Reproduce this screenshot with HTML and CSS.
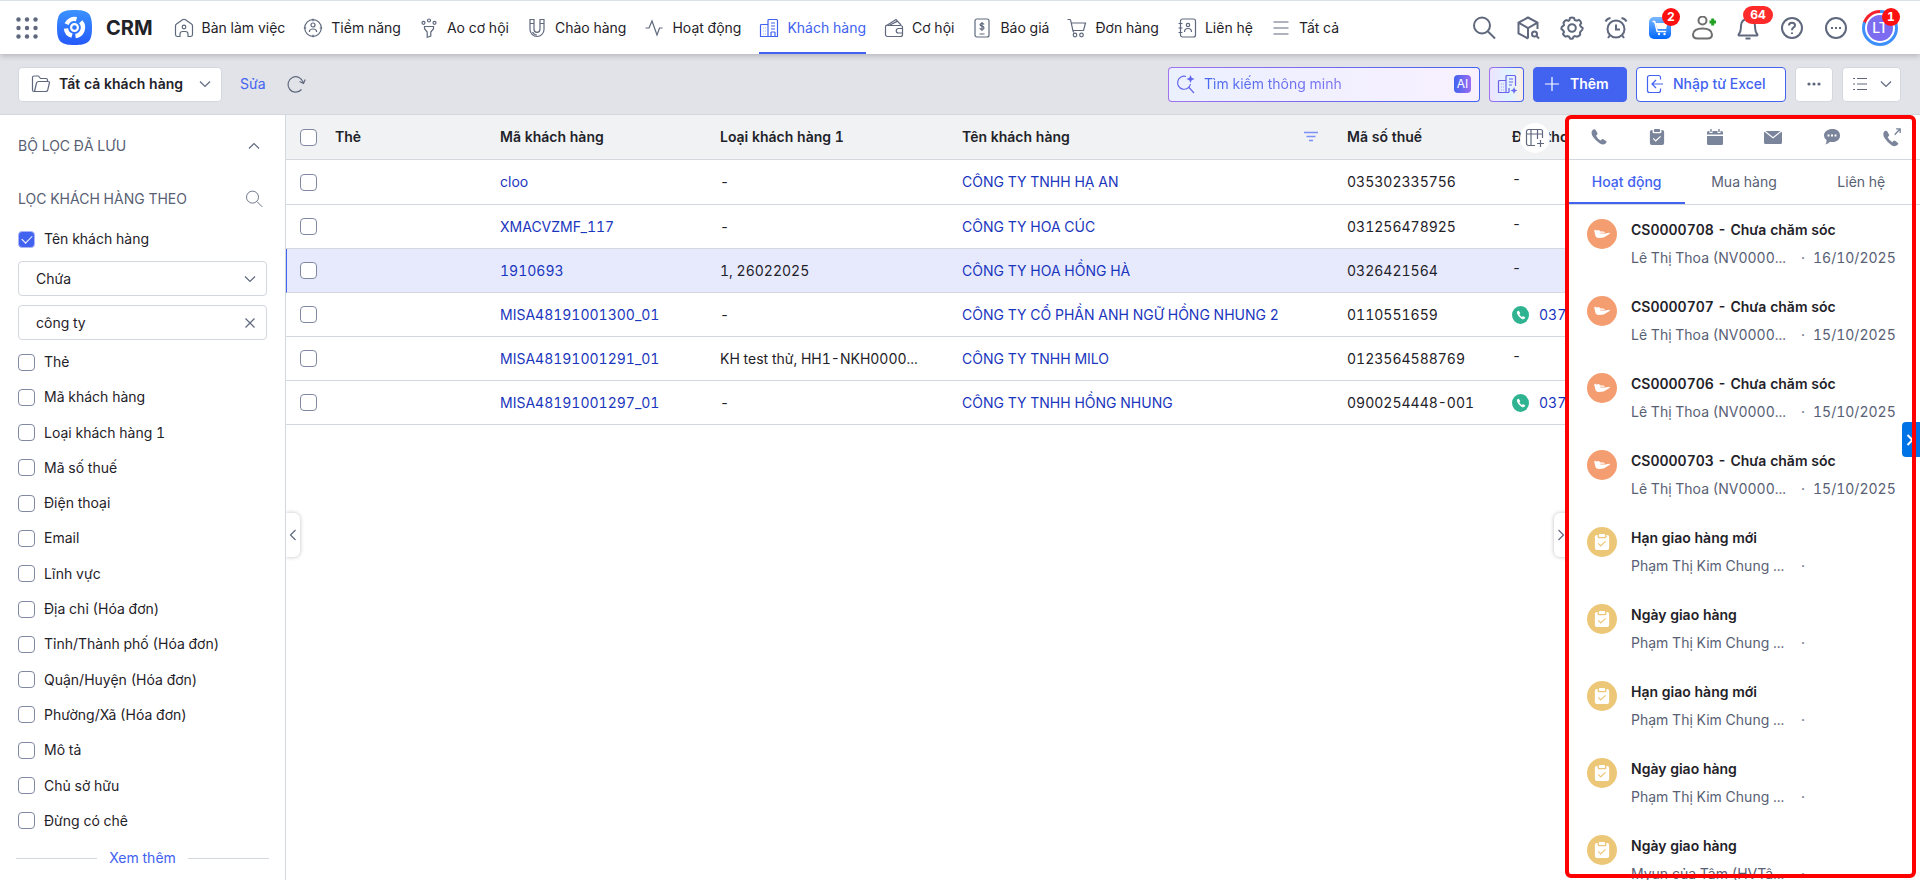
FILE: index.html
```html
<!DOCTYPE html>
<html lang="vi">
<head>
  <meta charset="UTF-8">
  <meta name="viewport" content="width=device-width, initial-scale=1.0">
  <title>CRM - Khách hàng</title>
  <link rel="stylesheet" href="styles.css">
</head>
<body>
  <!-- shared icons -->
  <svg class="sprite" aria-hidden="true">
    <symbol id="i-down" viewBox="0 0 12 12"><path d="M1 3.500l5 5 5-5"/></symbol>
    <symbol id="i-search" viewBox="0 0 24 24"><circle cx="10" cy="9.500" r="8"/><path d="M16 15.500l7 7"/></symbol>
    <symbol id="i-building" viewBox="0 0 20 20"><path d="M9 18.500V2.500a1 1 0 0 1 1-1h7.500a1 1 0 0 1 1 1v16H1.500V7.500a1 1 0 0 1 1-1H9M12 5h4M12 8h4M12 11h4M12 14v4.500M16 14v4.500M12 14h4M4 10h.5M6.500 10h.5M4 13h.5M6.500 13h.5M4 16h.5M6.500 16h.5"/></symbol>
    <symbol id="i-phone" viewBox="0 0 20 20"><path d="M2 3.500Q1 6 3.500 10T11 17.300q3.500 2 6 .2l1-1q1-1-.2-2l-3-2q-1-.6-1.900.3l-1 1.200q-2.800-1-5.200-5.300l1.300-1.400q.7-.8.2-1.800L6.300 2.300Q5.300 1 4.300 1.500Q2.800 2 2 3.500z"/></symbol>
    <symbol id="i-task" viewBox="0 0 18 20"><path fill-rule="evenodd" d="M4 2.200V4q0 1.700 1.700 1.700h6.600Q14 5.700 14 4V2.200h.8Q17 2.200 17 4.400v12.400Q17 19 14.800 19H3.200Q1 19 1 16.800V4.400Q1 2.200 3.200 2.200zM5.200 11.200l-.9.900 3.200 3.200 6-5.600-.9-.9-5.100 4.700zM6.500 1h5q1 0 1 1v1.500q0 .8-.8.8H6.300q-.8 0-.8-.8V2q0-1 1-1z"/></symbol>
    <symbol id="i-hand" viewBox="0 0 20 14"><path d="M1 3.500q0-2 1.500-1.500L4 3.200q1-1.200 2.500-.7l2 1.500h3.300q1.700.2 1.500 1.600H8v.9h6l4.300-1q1.500 0 .9 1.200L14 10q-2 1.300-4.500 1.500l-3.500.2Q3.500 11.500 2.500 9.500z"/></symbol>
  </svg>

  <header class="topbar">
    <button class="icon-btn apps" aria-label="Ứng dụng">
      <svg width="22" height="22" viewBox="0 0 22 22"><g class="fill"><circle cx="2.500" cy="2.500" r="2.200"/><circle cx="11" cy="2.500" r="2.200"/><circle cx="19.500" cy="2.500" r="2.200"/><circle cx="2.500" cy="11" r="2.200"/><circle cx="11" cy="11" r="2.200"/><circle cx="19.500" cy="11" r="2.200"/><circle cx="2.500" cy="19.500" r="2.200"/><circle cx="11" cy="19.500" r="2.200"/><circle cx="19.500" cy="19.500" r="2.200"/></g></svg>
    </button>
    <a class="brand" href="#">
      <svg width="35" height="35" viewBox="0 0 35 35">
        <defs><linearGradient id="logoFill" x1="0" y1="0" x2="0" y2="1"><stop offset="0" stop-color="#3b93ff"/><stop offset="1" stop-color="#2459fb"/></linearGradient></defs>
        <path fill="url(#logoFill)" d="M17.500 0C31 0 35 3 35 17.500S31 35 17.500 35 0 32 0 17.500 4 0 17.500 0z"/>
        <g fill="none" stroke="#fff"><path stroke-width="4.400" d="M9.600 14.200A8.500 8.500 0 0 1 19.500 9.200M23.700 11.800A8.500 8.500 0 0 1 18.500 26M15 25.700A8.500 8.500 0 0 1 9 18.500"/><circle cx="17.500" cy="17.500" r="3.400" stroke-width="2.200"/></g>
      </svg>
      <span>CRM</span>
    </a>
    <nav class="nav">
      <a href="#"><svg width="20" height="20" viewBox="0 0 20 20"><path d="M6 18.500H3.200A2 2 0 0 1 1.500 16.500V8q0-1.200 1-1.900l6-4.300q1.500-1 3 0l6 4.300q1 .7 1 1.900v8.500a2 2 0 0 1-1.700 2H14v-2.500a2.500 2.500 0 0 0-2.500-2.500h-3A2.500 2.500 0 0 0 6 16z"/><circle cx="10" cy="9" r="1.800"/></svg>Bàn làm việc</a>
      <a href="#"><svg width="20" height="20" viewBox="0 0 20 20"><circle cx="10" cy="10" r="8.300"/><circle cx="10" cy="7" r="2"/><path d="M6.500 14v-1q.3-2 3.500-2t3.500 2v1M10 .8v2.500M10 16.700v2.500M.8 10h2.500M16.700 10h2.500"/></svg>Tiềm năng</a>
      <a href="#"><svg width="20" height="20" viewBox="0 0 20 20"><circle cx="4.500" cy="4.800" r="1.500"/><circle cx="10" cy="2.500" r="1.500"/><circle cx="15.500" cy="4.800" r="1.500"/><path d="M5.500 8.500h9v2.200L11.800 14v4l-3.600 1.200V14l-2.700-3.300z"/></svg>Ao cơ hội</a>
      <a href="#"><svg width="20" height="20" viewBox="0 0 20 20"><path d="M3 1.500h4v9.800a3 3 0 0 0 6 0V1.500h4v10a7 7 0 0 1-14 0zM3 5.500h4M13 5.500h4M5.500 14q1.800 3 4.500 3"/></svg>Chào hàng</a>
      <a href="#"><svg width="20" height="20" viewBox="0 0 20 20"><path d="M1.500 10H5l3-7 5 14 2.500-7h3"/></svg>Hoạt động</a>
      <a class="active" href="#"><svg width="20" height="20"><use href="#i-building"/></svg>Khách hàng</a>
      <a href="#"><svg width="20" height="20" viewBox="0 0 20 20"><path d="M3.500 7.500h13a2 2 0 0 1 2 2v7a2 2 0 0 1-2 2h-13a2 2 0 0 1-2-2V9q0-1.500 1.500-1.800L12 1.500l5 5.500M5.500 7.300l8-4.200M18.500 10.500h-4a2.200 2.200 0 0 0 0 4.500h4"/></svg>Cơ hội</a>
      <a href="#"><svg width="20" height="20" viewBox="0 0 20 20"><rect x="3" y="1" width="14" height="18" rx="2"/><path d="M12 6.500q-.5-1.200-2-1.200t-2 1.300q0 1.200 2 1.600t2 1.700q0 1.500-2 1.500t-2.200-1.300M10 4v9M7.500 16h5"/></svg>Báo giá</a>
      <a href="#"><svg width="20" height="20" viewBox="0 0 20 20"><path d="M.5 1.500h2q1 0 1.200 1l2.200 10h10.600l2-7.500H4.500M5.900 12.500l.8 2"/><circle cx="8" cy="17" r="1.800"/><circle cx="14.500" cy="17" r="1.800"/></svg>Đơn hàng</a>
      <a href="#"><svg width="20" height="20" viewBox="0 0 20 20"><rect x="3.500" y="1" width="15" height="18" rx="2"/><circle cx="11" cy="7" r="1.700"/><path d="M7.500 14q0-3.500 3.500-3.500t3.500 3.500M1.500 5.500h4M1.500 10h4M1.500 14.500h4"/></svg>Liên hệ</a>
      <a href="#"><svg width="20" height="20" viewBox="0 0 20 20"><path d="M2.500 4h15M2.500 10h15M2.500 16h15"/></svg>Tất cả</a>
    </nav>
    <div class="tools">
      <button class="icon-btn" aria-label="Tìm kiếm"><svg width="24" height="24"><use href="#i-search"/></svg></button>
      <button class="icon-btn" aria-label="Tra cứu"><svg width="24" height="24" viewBox="0 0 24 24"><path d="M12 22.500l-9.500-5V6.700L12 1.500l9.500 5.200V13M2.500 6.700L12 12l9.500-5.300M12 12v10.500"/><circle cx="18.500" cy="18" r="2.500"/><path d="M20.500 20l2.500 2.500"/></svg></button>
      <button class="icon-btn" aria-label="Thiết lập"><svg width="24" height="24" viewBox="0 0 24 24"><circle cx="12" cy="12" r="3.800"/><path d="M10 2q2-1 4 0l.8 2.200 2.100.4 2-.7q2 1.200 2.300 3.200L20 9l.8 1.700 1.900 1.300q.2 2-1.900 3.300L20 16.500l.2 2.200q-1.300 1.800-3.300 2l-2-.7-1.400.8-.9 1.800q-1.200.4-2.500 0l-.9-1.800-1.600-.8-2.100.6q-1.700-.8-2.500-2.600L4 16l-.8-1.500-1.800-1.600q-.2-1.400.8-2.300L4 9.200l-.5-2.500q1-2 3-2.700l1.900.8 1.100-.8z"/></svg></button>
      <button class="icon-btn" aria-label="Nhắc nhở"><svg width="24" height="24" viewBox="0 0 24 24"><circle cx="12" cy="13" r="8.500"/><path d="M12 8.500V13.500h4M1.500 5.500Q3 2.500 6.500 2M22.500 5.500Q21 2.500 17.500 2M5.800 19.500L4 22M18.200 19.500L20 22"/></svg></button>
      <button class="icon-btn" aria-label="Giỏ hàng"><svg width="22" height="22" viewBox="0 0 22 22"><defs><linearGradient id="shopFill" x1="0" y1="0" x2="0" y2="1"><stop offset="0" stop-color="#7cb8ff"/><stop offset="1" stop-color="#0067ff"/></linearGradient></defs><rect width="22" height="22" rx="5" fill="url(#shopFill)" stroke="none"/><path class="white" d="M6.500 6h12l-1.300 6H8.500z"/><path class="white-line" d="M3.500 4.500h2.200l2.500 10h9"/><circle class="white" cx="10" cy="17" r="1.200"/><circle class="white" cx="15.500" cy="17" r="1.200"/></svg><span class="badge">2</span></button>
      <button class="icon-btn" aria-label="Thêm người dùng"><svg width="24" height="24" viewBox="0 0 24 24"><g stroke="#6e6e6e"><circle cx="10.500" cy="4.500" r="4"/><path d="M5.500 22.500Q1 22.500 1 18.500 1.500 12.500 10.500 12.500T20 18.500q0 4-4.500 4z"/></g><path stroke="#21a121" stroke-width="3" d="M17.500 6H24M20.700 2.500v7"/></svg></button>
      <button class="icon-btn" aria-label="Thông báo"><svg width="24" height="24" viewBox="0 0 24 24"><path d="M3 19.500q-1-.5 0-1.700Q5 15.500 5 9.500 5.500 3 12 3t7 6.500q0 6 2 8.300 1 1.200 0 1.700zM9.500 22.500h5"/></svg><span class="badge wide">64</span></button>
      <button class="icon-btn" aria-label="Trợ giúp"><svg width="24" height="24" viewBox="0 0 24 24"><circle cx="12" cy="12" r="10"/><path d="M9 9.500Q9 6.800 12 6.800t3 2.500q0 1.600-1.700 2.400Q12 12.500 12 14.200M12 16.500v1.500"/></svg></button>
      <button class="icon-btn" aria-label="Khác"><svg width="24" height="24" viewBox="0 0 24 24"><circle cx="12" cy="12" r="10"/><path d="M7 12h2M11 12h2M15 12h2"/></svg></button>
      <button class="icon-btn" aria-label="Tài khoản"><span class="avatar"><span>LT</span></span><span class="badge">1</span></button>
    </div>
  </header>

  <section class="toolbar">
    <button class="btn view-select"><svg width="20" height="20" viewBox="0 0 20 20"><path d="M3.500 17.500H3a1.500 1.500 0 0 1-1.500-1.500V3.500A1.500 1.500 0 0 1 3 2h4.500l2 2.500h5.500q1.500 0 1.500 1.500v1M3.500 17.500L5.500 9q.4-1.500 2-1.500h9.500q1.800 0 1.400 1.500l-1.700 7q-.4 1.500-2 1.500z"/></svg>Tất cả khách hàng<svg class="end" width="12" height="12"><use href="#i-down"/></svg></button>
    <a class="edit-link" href="#">Sửa</a>
    <button class="icon-btn refresh" aria-label="Làm mới"><svg width="20" height="20" viewBox="0 0 20 20"><path d="M15.500 15.500a7.700 7.700 0 1 1 1.700-7M13.500 7.500l4 2 1.700-4"/></svg></button>
    <div class="actions">
      <label class="smart-search">
        <svg width="20" height="20" viewBox="0 0 20 20"><path d="M10 2.500a6.500 6.500 0 1 0 4.500 7.500M13 13.500l5 5.500"/><path class="spark" d="M14.500 1l1.200 2.800L18.500 5l-2.800 1.200-1.200 2.800-1.200-2.800L10.500 5l2.800-1.200z"/></svg>
        <input type="text" placeholder="Tìm kiếm thông minh" aria-label="Tìm kiếm thông minh">
        <span class="ai">AI</span>
      </label>
      <button class="btn ai-btn" aria-label="Khách hàng AI"><svg width="20" height="20" viewBox="0 0 20 20"><path d="M12 18.500H1.500V7.500a1 1 0 0 1 1-1H9M9 18.500V2.500a1 1 0 0 1 1-1h7.500a1 1 0 0 1 1 1V12M12 5h4M12 8h4M12 11h3M12 14v4.500M4 10h.5M6.500 10h.5M4 13h.5M6.500 13h.5M4 16h.5M6.500 16h.5"/><path class="spark" d="M17 13l1 2.500 2.500 1-2.500 1-1 2.500-1-2.500-2.500-1 2.500-1z"/></svg></button>
      <button class="btn primary"><svg width="16" height="16" viewBox="0 0 16 16"><path d="M8 1v14M1 8h14"/></svg>Thêm</button>
      <button class="btn outline"><svg width="20" height="20" viewBox="0 0 20 20"><path d="M15.500 5.500V3.500a2 2 0 0 0-2-2h-9a2 2 0 0 0-2 2v13a2 2 0 0 0 2 2h9a2 2 0 0 0 2-2v-2M18 10H7M11 6l-4 4 4 4"/></svg>Nhập từ Excel</button>
      <button class="btn more" aria-label="Thêm tùy chọn"><svg width="14" height="4" viewBox="0 0 14 4"><g class="fill"><circle cx="2" cy="2" r="1.600"/><circle cx="7" cy="2" r="1.600"/><circle cx="12" cy="2" r="1.600"/></g></svg></button>
      <button class="btn list-view" aria-label="Kiểu hiển thị"><svg width="16" height="16" viewBox="0 0 16 16"><path d="M1 2.500h2M5 2.500h10M1 8h2M5 8h10M1 13.500h2M5 13.500h10"/></svg><svg width="12" height="12"><use href="#i-down"/></svg></button>
    </div>
  </section>

  <main class="content">
    <aside class="sidebar">
      <div class="saved">
        <h2>BỘ LỌC ĐÃ LƯU</h2>
        <button class="icon-btn" aria-label="Thu gọn"><svg class="up" width="12" height="12"><use href="#i-down"/></svg></button>
      </div>
      <div class="filter-head">
        <h2>LỌC KHÁCH HÀNG THEO</h2>
        <button class="icon-btn" aria-label="Tìm bộ lọc"><svg width="18" height="18"><use href="#i-search"/></svg></button>
      </div>
      <label class="check current"><input type="checkbox" checked>Tên khách hàng</label>
      <div class="field">
        <select aria-label="Điều kiện"><option>Chứa</option></select>
        <svg class="caret" width="12" height="12"><use href="#i-down"/></svg>
      </div>
      <div class="field">
        <input type="text" value="công ty" aria-label="Giá trị">
        <button class="icon-btn caret" aria-label="Xóa"><svg width="12" height="12" viewBox="0 0 12 12"><path d="M1.500 1.500l9 9M10.500 1.500l-9 9"/></svg></button>
      </div>
      <div class="filters">
        <label class="check"><input type="checkbox">Thẻ</label>
        <label class="check"><input type="checkbox">Mã khách hàng</label>
        <label class="check"><input type="checkbox">Loại khách hàng 1</label>
        <label class="check"><input type="checkbox">Mã số thuế</label>
        <label class="check"><input type="checkbox">Điện thoại</label>
        <label class="check"><input type="checkbox">Email</label>
        <label class="check"><input type="checkbox">Lĩnh vực</label>
        <label class="check"><input type="checkbox">Địa chỉ (Hóa đơn)</label>
        <label class="check"><input type="checkbox">Tỉnh/Thành phố (Hóa đơn)</label>
        <label class="check"><input type="checkbox">Quận/Huyện (Hóa đơn)</label>
        <label class="check"><input type="checkbox">Phường/Xã (Hóa đơn)</label>
        <label class="check"><input type="checkbox">Mô tả</label>
        <label class="check"><input type="checkbox">Chủ sở hữu</label>
        <label class="check"><input type="checkbox">Đừng có chê</label>
      </div>
      <div class="see-more"><a href="#">Xem thêm</a></div>
    </aside>

    <section class="grid">
      <table>
        <colgroup><col class="c-check"><col class="c-tag"><col class="c-code"><col class="c-type"><col class="c-name"><col class="c-tax"><col class="c-tel"></colgroup>
        <thead>
          <tr><th><input type="checkbox" aria-label="Chọn tất cả"></th><th>Thẻ</th><th>Mã khách hàng</th><th>Loại khách hàng 1</th><th><span class="th-filter">Tên khách hàng<svg width="16" height="12" viewBox="0 0 16 12"><path d="M1 1.500h14M3.500 5.500h9M6 9.500h4"/></svg></span></th><th>Mã số thuế</th><th>Điện thoại</th></tr>
        </thead>
        <tbody>
          <tr><td><input type="checkbox" aria-label="Chọn cloo"></td><td></td><td><a href="#">cloo</a></td><td>-</td><td><a href="#">CÔNG TY TNHH HẠ AN</a></td><td>035302335756</td><td class="tel">-</td></tr>
          <tr><td><input type="checkbox" aria-label="Chọn XMACVZMF_117"></td><td></td><td><a href="#">XMACVZMF_117</a></td><td>-</td><td><a href="#">CÔNG TY HOA CÚC</a></td><td>031256478925</td><td class="tel">-</td></tr>
          <tr class="selected"><td><input type="checkbox" aria-label="Chọn 1910693"></td><td></td><td><a href="#">1910693</a></td><td>1, 26022025</td><td><a href="#">CÔNG TY HOA HỒNG HÀ</a></td><td>0326421564</td><td class="tel">-</td></tr>
          <tr><td><input type="checkbox" aria-label="Chọn MISA48191001300_01"></td><td></td><td><a href="#">MISA48191001300_01</a></td><td>-</td><td><a href="#">CÔNG TY CỔ PHẦN ANH NGỮ HỒNG NHUNG 2</a></td><td>0110551659</td><td><a class="call" href="#"><span><svg width="10" height="10"><use href="#i-phone"/></svg></span>037</a></td></tr>
          <tr><td><input type="checkbox" aria-label="Chọn MISA48191001291_01"></td><td></td><td><a href="#">MISA48191001291_01</a></td><td>KH test thử, HH1-NKH0000...</td><td><a href="#">CÔNG TY TNHH MILO</a></td><td>0123564588769</td><td class="tel">-</td></tr>
          <tr><td><input type="checkbox" aria-label="Chọn MISA48191001297_01"></td><td></td><td><a href="#">MISA48191001297_01</a></td><td>-</td><td><a href="#">CÔNG TY TNHH HỒNG NHUNG</a></td><td>0900254448-001</td><td><a class="call" href="#"><span><svg width="10" height="10"><use href="#i-phone"/></svg></span>037</a></td></tr>
        </tbody>
      </table>
      <button class="col-config" aria-label="Tùy chỉnh cột"><svg width="20" height="20" viewBox="0 0 20 20"><path d="M10 17.500H3.500a2 2 0 0 1-2-2v-12a2 2 0 0 1 2-2h12a2 2 0 0 1 2 2V10M1.500 6h16M6 1.500v16M12.500 1.500V11M15.500 12v7M12 15.500h7"/></svg></button>
      <button class="handle left" aria-label="Ẩn bộ lọc"><svg width="12" height="12"><use href="#i-down"/></svg></button>
      <button class="handle right" aria-label="Ẩn chi tiết"><svg width="12" height="12"><use href="#i-down"/></svg></button>
    </section>

    <aside class="detail">
      <div class="quick">
        <button class="icon-btn" aria-label="Gọi điện"><svg width="18" height="18"><use href="#i-phone"/></svg></button>
        <button class="icon-btn" aria-label="Nhiệm vụ"><svg width="16" height="18"><use href="#i-task"/></svg></button>
        <button class="icon-btn" aria-label="Lịch hẹn"><svg width="18" height="18" viewBox="0 0 18 18"><path d="M1 8h16v7.500q0 1.500-1.500 1.500h-13Q1 17 1 15.500zM1 6.500V4.500Q1 3 2.500 3h1v2h3V3h5v2h3V3h1Q17 3 17 4.500v2zM4.300 1h1.400v3H4.300zM12.300 1h1.400v3h-1.400z"/></svg></button>
        <button class="icon-btn" aria-label="Email"><svg width="18" height="18" viewBox="0 0 18 18"><path d="M1.500 3h15L9 9zM0 5Q0 4 .5 3.800L9 10.500l8.500-6.700Q18 4 18 5v9.500q0 1.500-1.500 1.500h-15Q0 16 0 14.500z"/></svg></button>
        <button class="icon-btn" aria-label="SMS"><svg width="18" height="18" viewBox="0 0 18 18"><path fill-rule="evenodd" d="M9.500 1C14 1 17 3.500 17 7.500S14 14 9.500 14q-1.500 0-2.500-.3Q5.500 16 2 16.500 4 15 3.500 12 1 10.500 1 7.500C1 3.500 5 1 9.500 1zM4.500 6.500v2h2v-2zM8 6.500v2h2v-2zM11.500 6.500v2h2v-2z"/></svg></button>
        <button class="icon-btn" aria-label="Cuộc gọi đi"><svg width="20" height="20" viewBox="0 0 22 22"><path d="M1.500 6.500Q1 9 3 12.500T10.500 20q3.500 2 6 .2l1-1q1-1-.2-2l-3-2q-1-.6-1.900.3l-1 1.200Q8.600 15.700 6.200 11.400l1.300-1.400q.7-.8.2-1.800L5.800 5Q4.800 3.700 3.800 4.200 2.300 4.700 1.500 6.500z"/><path class="thin" d="M14 8.500L20 2M15.500 2H20v4.500"/></svg></button>
      </div>
      <nav class="tabs">
        <a class="active" href="#">Hoạt động</a>
        <a href="#">Mua hàng</a>
        <a href="#">Liên hệ</a>
      </nav>
      <ul class="feed">
        <li><span class="dot care"><svg width="18" height="12"><use href="#i-hand"/></svg></span><div><h3>CS0000708 - Chưa chăm sóc</h3><p><span>Lê Thị Thoa (NV0000...</span><i>·</i><time>16/10/2025</time></p></div></li>
        <li><span class="dot care"><svg width="18" height="12"><use href="#i-hand"/></svg></span><div><h3>CS0000707 - Chưa chăm sóc</h3><p><span>Lê Thị Thoa (NV0000...</span><i>·</i><time>15/10/2025</time></p></div></li>
        <li><span class="dot care"><svg width="18" height="12"><use href="#i-hand"/></svg></span><div><h3>CS0000706 - Chưa chăm sóc</h3><p><span>Lê Thị Thoa (NV0000...</span><i>·</i><time>15/10/2025</time></p></div></li>
        <li><span class="dot care"><svg width="18" height="12"><use href="#i-hand"/></svg></span><div><h3>CS0000703 - Chưa chăm sóc</h3><p><span>Lê Thị Thoa (NV0000...</span><i>·</i><time>15/10/2025</time></p></div></li>
        <li><span class="dot task"><svg width="16" height="18"><use href="#i-task"/></svg></span><div><h3>Hạn giao hàng mới</h3><p><span>Phạm Thị Kim Chung ...</span><i>·</i></p></div></li>
        <li><span class="dot task"><svg width="16" height="18"><use href="#i-task"/></svg></span><div><h3>Ngày giao hàng</h3><p><span>Phạm Thị Kim Chung ...</span><i>·</i></p></div></li>
        <li><span class="dot task"><svg width="16" height="18"><use href="#i-task"/></svg></span><div><h3>Hạn giao hàng mới</h3><p><span>Phạm Thị Kim Chung ...</span><i>·</i></p></div></li>
        <li><span class="dot task"><svg width="16" height="18"><use href="#i-task"/></svg></span><div><h3>Ngày giao hàng</h3><p><span>Phạm Thị Kim Chung ...</span><i>·</i></p></div></li>
        <li><span class="dot task"><svg width="16" height="18"><use href="#i-task"/></svg></span><div><h3>Ngày giao hàng</h3><p><span>Myun của Tâm (HVTâ...</span><i>·</i></p></div></li>
      </ul>
      <button class="side-tab" aria-label="Đóng"><svg width="12" height="12"><use href="#i-down"/></svg></button>
      <div class="highlight"></div>
    </aside>
  </main>
</body>
</html>
```

FILE: styles.css
```css
* {
  box-sizing: border-box;
}

body {
  margin: 0;
  height: 100vh;
  display: flex;
  flex-direction: column;
  overflow: hidden;
  font-family: Inter, 'Liberation Sans', sans-serif;
  font-size: 14px;
  font-variant-numeric: tabular-nums;
  line-height: 20px;
  color: #1f2229;
  background: #fff;
}

a {
  color: inherit;
  text-decoration: none;
}

button,
input,
select {
  font: inherit;
  color: inherit;
}

button {
  cursor: pointer;
}

svg {
  flex: none;
  fill: none;
  stroke: #5f687d;
  stroke-width: 1.2;
}

.sprite {
  position: absolute;
  width: 0;
  height: 0;
}

.fill {
  fill: #5f687d;
  stroke: none;
}

.spark {
  fill: #6568ee;
  stroke: none;
}

.icon-btn {
  position: relative;
  display: flex;
  align-items: center;
  justify-content: center;
  padding: 0;
  border: none;
  background: none;
}

/* top bar */
.topbar {
  position: relative;
  z-index: 2;
  flex: none;
  height: 54px;
  display: flex;
  align-items: center;
  padding: 0 18px 0 16px;
  border-top: 1px solid #d9e2e8;
  background: #fff;
  box-shadow: 0 2px 6px rgba(0, 0, 0, 0.2);
}

.brand {
  display: flex;
  align-items: center;
  gap: 14px;
  margin: 0 21px 0 19px;
  font-size: 20px;
  font-weight: 700;
  line-height: 24px;
}

.brand svg {
  stroke: none;
}

.nav {
  display: flex;
  align-self: stretch;
  gap: 18px;
}

.nav a {
  display: flex;
  align-items: center;
  gap: 8px;
  border-bottom: 2px solid transparent;
  border-top: 2px solid transparent;
  white-space: nowrap;
}

.nav a.active {
  color: #4262f0;
  border-bottom-color: #4262f0;
}

.nav a.active svg {
  stroke: #4262f0;
}

.tools {
  display: flex;
  align-items: center;
  margin-left: auto;
}

.tools .icon-btn {
  width: 44px;
  height: 44px;
}

.tools svg {
  stroke-width: 2;
}

.tools .white {
  fill: #fff;
  stroke: none;
}

.tools .white-line {
  stroke: #fff;
  stroke-width: 1.5;
}

.badge {
  position: absolute;
  top: 2px;
  right: 2px;
  min-width: 18px;
  height: 18px;
  border-radius: 9px;
  background: #ff1010;
  color: #fff;
  font-size: 12px;
  font-weight: 700;
  line-height: 18px;
}

.badge.wide {
  top: 0;
  right: -3px;
  width: 30px;
  background: #ff2b2b;
}

.avatar {
  display: flex;
  padding: 3px;
  border-radius: 50%;
  background: conic-gradient(#3d90fb 0 290deg, #f5222d 290deg);
}

.avatar span {
  width: 30px;
  height: 30px;
  border: 2px solid #fff;
  border-radius: 50%;
  background: #7b6cf0;
  color: #fff;
  font-weight: 500;
  line-height: 26px;
}

/* toolbar */
.toolbar {
  flex: none;
  display: flex;
  align-items: center;
  height: 61px;
  padding: 0 19px 0 18px;
  border-bottom: 1px solid #d3d7de;
  background: #e2e3e9;
}

.btn {
  display: flex;
  align-items: center;
  justify-content: center;
  height: 35px;
  padding: 0;
  border: 1px solid #d3d7de;
  border-radius: 4px;
  background: #fff;
  font-weight: 500;
  white-space: nowrap;
}

.view-select {
  padding: 0 10px 0 12px;
  gap: 8px;
  font-weight: 600;
}

.view-select .end {
  margin-left: 8px;
}

.edit-link {
  margin: 0 20px 0 18px;
  color: #4262f0;
}

.actions {
  display: flex;
  gap: 9px;
  margin-left: auto;
}

.smart-search {
  display: flex;
  align-items: center;
  width: 312px;
  height: 35px;
  padding: 0 8px 0 7px;
  gap: 8px;
  border: 1px solid transparent;
  border-radius: 4px;
  background: linear-gradient(90deg, #ebf0ff, #f8f0ff) padding-box, linear-gradient(90deg, #a273ee, #4262f0) border-box;
}

.smart-search svg {
  stroke: #6568ee;
}

.smart-search input {
  flex: 1;
  min-width: 0;
  padding: 0;
  border: none;
  outline: none;
  background: none;
}

.smart-search input::placeholder {
  opacity: 1;
  color: transparent;
  background: linear-gradient(90deg, #4868f0, #a67cf0);
  background-clip: text;
}

.ai {
  width: 17px;
  height: 18px;
  border-radius: 4px;
  background: linear-gradient(90deg, #4262f0, #9a6cf0);
  color: #fff;
  font-size: 12px;
  line-height: 18px;
  text-align: center;
}

.ai-btn {
  width: 35px;
  border-color: transparent;
  background: linear-gradient(90deg, #ece4ff, #e0f4ff 60%, #fdeee4) padding-box, linear-gradient(90deg, #a273ee, #4262f0) border-box;
}

.ai-btn svg {
  stroke: #6a62ea;
}

.primary,
.outline {
  justify-content: flex-start;
  width: 94px;
  padding-left: 10px;
  gap: 10px;
  border-color: #4262f0;
  background: #4262f0;
  color: #fff;
  font-weight: 600;
}

.primary svg {
  stroke: #fff;
}

.outline {
  width: 150px;
  padding-left: 8px;
  gap: 8px;
  background: #fff;
  color: #4262f0;
  font-weight: 500;
}

.outline svg {
  stroke: #4262f0;
}

.more {
  width: 38px;
}

.list-view {
  width: 59px;
  gap: 12px;
}

/* layout */
.content {
  flex: 1;
  min-height: 0;
  display: flex;
}

.sidebar {
  flex: none;
  display: flex;
  flex-direction: column;
  width: 286px;
  padding: 0 18px;
  border-right: 1px solid #d3d7de;
}

.sidebar h2 {
  margin: 0;
  font-size: 14px;
  font-weight: 400;
  color: #586074;
}

.saved,
.filter-head {
  display: flex;
  align-items: center;
  justify-content: space-between;
  height: 62px;
  padding-right: 7px;
}

.filter-head {
  height: 44px;
  padding-right: 4px;
}

.up {
  transform: rotate(180deg);
}

.check {
  display: flex;
  align-items: center;
  gap: 9px;
}

.check.current {
  height: 36px;
  margin-bottom: 4px;
}

input[type="checkbox"] {
  appearance: none;
  flex: none;
  display: block;
  width: 17px;
  height: 17px;
  margin: 0;
  border: 1px solid #8089a0;
  border-radius: 4px;
  background: #fff;
}

input[type="checkbox"]:checked {
  position: relative;
  border-color: #a9b6f7;
  background: #4262f0;
}

input[type="checkbox"]:checked::after {
  content: '';
  position: absolute;
  left: 5px;
  top: 1px;
  width: 5px;
  height: 9px;
  border: solid #fff;
  border-width: 0 1px 1px 0;
  transform: rotate(45deg);
}

.field {
  position: relative;
  margin-bottom: 9px;
}

.field select,
.field input {
  appearance: none;
  display: block;
  width: 100%;
  height: 35px;
  padding: 0 32px 0 17px;
  border: 1px solid #d3d7de;
  border-radius: 4px;
  outline: none;
  background: #fff;
}

.caret {
  position: absolute;
  top: 12px;
  right: 11px;
  pointer-events: none;
}

.icon-btn.caret {
  position: absolute;
  pointer-events: auto;
}

.filters {
  flex: 1;
  display: flex;
  flex-direction: column;
  justify-content: space-between;
  margin-top: 3px;
}

.see-more {
  display: flex;
  align-items: center;
  gap: 12px;
  margin: 17px -2px 12px;
  color: #4262f0;
}

.see-more::before,
.see-more::after {
  content: '';
  flex: 1;
  border-top: 1px solid #d3d7de;
}

/* customer table */
.grid {
  position: relative;
  flex: 1;
  min-width: 0;
  overflow: hidden;
}

table {
  width: 1398px;
  table-layout: fixed;
  border-collapse: separate;
  border-spacing: 0;
}

.c-check { width: 41px; }
.c-tag { width: 165px; }
.c-code { width: 220px; }
.c-type { width: 242px; }
.c-name { width: 385px; }
.c-tax { width: 165px; }
.c-tel { width: 180px; }

th,
td {
  height: 44px;
  padding: 0 8px;
  border-bottom: 1px solid #d3d7de;
  text-align: left;
  white-space: nowrap;
}

th,
tbody tr:first-child td {
  height: 45px;
}

th {
  background: #f0f2f4;
  font-weight: 600;
}

th:first-child,
td:first-child {
  padding: 0 0 0 14px;
}

td a {
  color: #1a36bd;
}

.tel {
  padding-bottom: 6px;
}

.selected td {
  background: #e7eafd;
}

.selected td:first-child {
  padding-left: 13px;
  border-left: 1px solid #4262f0;
}

.th-filter {
  display: flex;
  align-items: center;
  justify-content: space-between;
  padding-right: 12px;
}

.th-filter svg {
  stroke: #7b91f7;
  stroke-width: 1.5;
}

.call {
  display: flex;
  align-items: center;
  gap: 10px;
}

.call span {
  display: flex;
  align-items: center;
  justify-content: center;
  width: 17px;
  height: 18px;
  border-radius: 50%;
  background: #2fb391;
}

.call svg {
  fill: #fff;
  stroke: none;
}

.col-config {
  position: absolute;
  top: 8px;
  right: 18px;
  display: flex;
  align-items: center;
  justify-content: center;
  width: 30px;
  height: 30px;
  padding: 0;
  border: none;
  border-radius: 50%;
  background: #fff;
}

.handle {
  position: absolute;
  top: 398px;
  width: 14px;
  height: 44px;
  display: flex;
  align-items: center;
  justify-content: center;
  padding: 0;
  border: none;
  background: #fff;
  box-shadow: 0 0 4px rgba(0, 0, 0, 0.25);
}

.handle svg {
  transform: rotate(90deg);
}

.handle.left {
  left: 0;
  border-radius: 0 6px 6px 0;
}

.handle.right {
  right: 0;
  border-radius: 6px 0 0 6px;
}

.handle.right svg {
  transform: rotate(-90deg);
}

/* detail panel */
.detail {
  position: relative;
  flex: none;
  display: flex;
  flex-direction: column;
  width: 352px;
  background: #fff;
}

.quick {
  flex: none;
  display: flex;
  justify-content: space-between;
  height: 45px;
  padding: 0 18px 0 22px;
  border-bottom: 1px solid #d3d7de;
}

.quick svg {
  fill: #7a849b;
  stroke: none;
}

.quick .thin {
  fill: none;
  stroke: #7a849b;
  stroke-width: 1.5;
}

.tabs {
  flex: none;
  display: flex;
  height: 45px;
  border-bottom: 1px solid #d3d7de;
}

.tabs a {
  flex: 1;
  line-height: 44px;
  text-align: center;
  color: #586074;
}

.tabs a.active {
  border-bottom: 2px solid #4262f0;
  color: #4262f0;
  font-weight: 500;
}

.feed {
  flex: 1;
  min-height: 0;
  overflow: hidden;
  margin: 0;
  padding: 14px 0 0 19px;
  list-style: none;
}

.feed li {
  display: flex;
  gap: 14px;
  height: 77px;
}

.dot {
  display: flex;
  align-items: center;
  justify-content: center;
  width: 30px;
  height: 30px;
  border-radius: 50%;
  background: #f49d70;
}

.dot.task {
  background: #edc778;
}

.dot svg {
  fill: #fff;
  stroke: none;
}

.feed h3 {
  margin: 0;
  font-size: 14px;
  font-weight: 600;
  line-height: 22px;
}

.feed p {
  display: flex;
  margin: 7px 0 0;
  color: #586074;
  line-height: 20px;
  white-space: nowrap;
}

.feed p span {
  width: 170px;
}

.feed i {
  width: 12px;
  font-style: normal;
}

.side-tab {
  position: absolute;
  top: 307px;
  right: 0;
  width: 18px;
  height: 35px;
  padding: 0 0 0 2px;
  border: none;
  border-radius: 4px 0 0 4px;
  background: #0073e6;
}

.side-tab svg {
  display: block;
  transform: rotate(-90deg);
  stroke: #fff;
  stroke-width: 2;
}

/* red frame around the panel */
.highlight {
  position: absolute;
  inset: 0 4px 2px -3px;
  border: 4px solid #f00;
  border-radius: 6px;
  pointer-events: none;
}
```
